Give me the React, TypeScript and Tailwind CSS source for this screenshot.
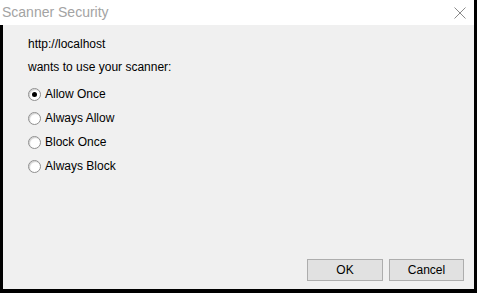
import { useState } from 'react'

const options = ['Allow Once', 'Always Allow', 'Block Once', 'Always Block']

const Radio = ({ checked }: { checked: boolean }) => (
  <span className="flex h-[13px] w-[13px] items-center justify-center rounded-full border border-[#8f8f8f] bg-white shadow-[inset_1px_1px_1px_#d0d0d0]">
    {checked && <span className="h-[5px] w-[5px] rounded-full bg-black" />}
  </span>
)

export default function App() {
  const [choice, setChoice] = useState('Allow Once')

  return (
    <div
      className="flex h-[293px] w-[477px] bg-black text-[12px] text-black"
      style={{ fontFamily: '"Liberation Sans", Arial, sans-serif' }}
    >
      <div className="flex h-[289px] w-[474px] flex-col">
        <div className="flex h-[25px] items-center justify-between bg-white pl-[2px] pr-[8px]">
          <span className="text-[14px] text-[#a3a3a3]">Scanner Security</span>
          <svg width="12" height="12" viewBox="0 0 12 12" className="mt-[1px]">
            <path d="M0.5 0.5 L11.5 11.5 M11.5 0.5 L0.5 11.5" stroke="#8a8a8a" strokeWidth="1" />
          </svg>
        </div>

        <div className="ml-[3px] flex flex-1 flex-col bg-[#f0f0f0] pl-[25px]">
          <p className="mt-[12px] leading-[14px]">http://localhost</p>
          <p className="mt-[9px] leading-[14px]">wants to use your scanner:</p>

          <ul className="mt-[13px] flex flex-col gap-[10px]">
            {options.map((opt) => (
              <li
                key={opt}
                className="flex h-[14px] cursor-default items-center gap-[4px]"
                onClick={() => setChoice(opt)}
              >
                <Radio checked={choice === opt} />
                <span>{opt}</span>
              </li>
            ))}
          </ul>

          <div className="mt-auto mb-[8px] flex justify-end gap-[6px] pr-[10px]">
            <button className="h-[22px] w-[76px] border border-[#adadad] bg-[#e1e1e1]">OK</button>
            <button className="h-[22px] w-[75px] border border-[#adadad] bg-[#e1e1e1]">Cancel</button>
          </div>
        </div>
      </div>
    </div>
  )
}
